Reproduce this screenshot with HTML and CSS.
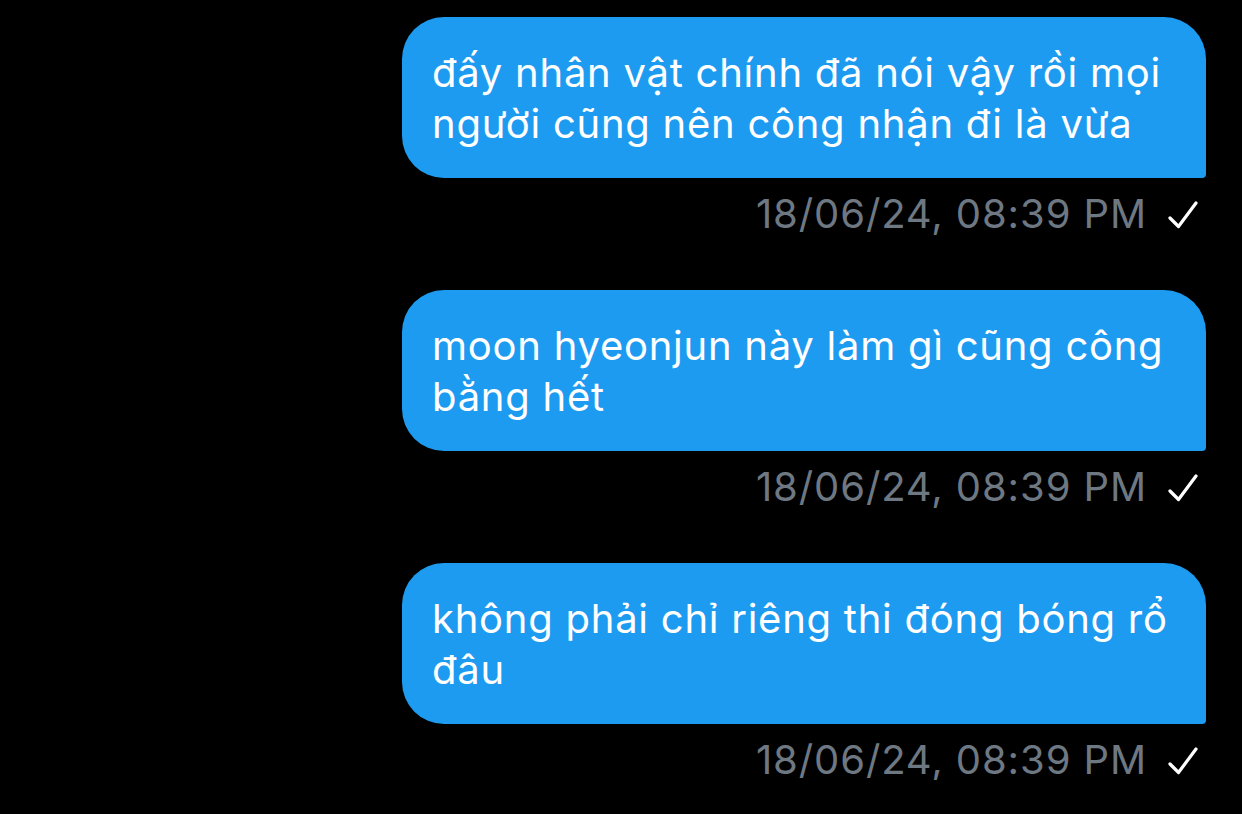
FILE: index.html
```html
<!DOCTYPE html>
<html lang="vi">
<head>
<meta charset="utf-8">
<link rel="stylesheet" href="styles.css">
</head>
<body>
<main class="thread">
  <div class="message">
    <div class="bubble">đấy nhân vật chính đã nói vậy rồi mọi người cũng nên công nhận đi là vừa</div>
    <div class="meta">
      <span class="time">18/06/24, 08:39 PM</span>
      <svg class="check" viewBox="0 0 30 28" width="30" height="28"><path d="M2 17 L10.5 25.5 L28 2" fill="none" stroke="#fff" stroke-width="3.2" stroke-linecap="round" stroke-linejoin="round"/></svg>
    </div>
  </div>
  <div class="message">
    <div class="bubble">moon hyeonjun này làm gì cũng công bằng hết</div>
    <div class="meta">
      <span class="time">18/06/24, 08:39 PM</span>
      <svg class="check" viewBox="0 0 30 28" width="30" height="28"><path d="M2 17 L10.5 25.5 L28 2" fill="none" stroke="#fff" stroke-width="3.2" stroke-linecap="round" stroke-linejoin="round"/></svg>
    </div>
  </div>
  <div class="message">
    <div class="bubble">không phải chỉ riêng thi đóng bóng rổ đâu</div>
    <div class="meta">
      <span class="time">18/06/24, 08:39 PM</span>
      <svg class="check" viewBox="0 0 30 28" width="30" height="28"><path d="M2 17 L10.5 25.5 L28 2" fill="none" stroke="#fff" stroke-width="3.2" stroke-linecap="round" stroke-linejoin="round"/></svg>
    </div>
  </div>
</main>
</body>
</html>
```
FILE: styles.css
```css
html, body {
  margin: 0;
  padding: 0;
  background: #000;
}
body {
  font-family: Inter, "Noto Sans", sans-serif;
  -webkit-font-smoothing: antialiased;
}
.thread {
  display: flex;
  flex-direction: column;
  align-items: flex-end;
  padding: 17px 36px 0 0;
  gap: 56px;
}
.message {
  display: flex;
  flex-direction: column;
  align-items: flex-end;
  gap: 16px;
}
.bubble {
  box-sizing: border-box;
  width: 804px;
  padding: 30px 20px 29px 30px;
  background: #1d9bf0;
  color: #fff;
  font-size: 40px;
  line-height: 51px;
  letter-spacing: 0.75px;
  border-radius: 42px 42px 4px 42px;
}
.meta {
  display: flex;
  align-items: center;
  gap: 21px;
  padding-right: 8px;
  height: 40px;
}
.time {
  color: #6e7882;
  font-size: 40px;
  line-height: 40px;
  letter-spacing: 0.9px;
}
.check {
  display: block;
  margin-top: 2px;
}
```
